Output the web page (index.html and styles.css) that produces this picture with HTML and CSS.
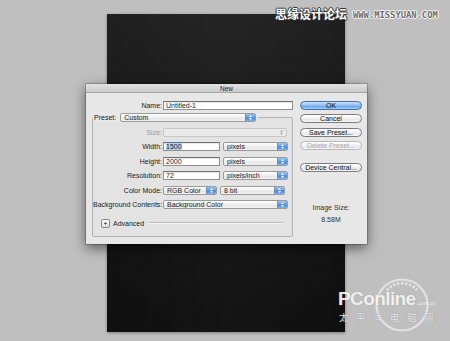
FILE: index.html
```html
<!DOCTYPE html>
<html>
<head>
<meta charset="utf-8">
<link rel="stylesheet" href="styles.css">
</head>
<body>
<div class="stage">
  <div class="doc"></div>

  <div class="dialog">
    <div class="titlebar">New</div>
    <div class="dbody">
      <div class="form">
        <div class="row name-row">
          <span class="label name-label">Name:</span>
          <span class="field name-field">Untitled-1</span>
        </div>
        <fieldset class="group">
          <legend class="legend">
            <span class="legend-in">
              <span class="plabel">Preset:</span>
              <span class="popup preset-pop"><span class="ptext">Custom</span><span class="cap"><svg width="9" height="9" viewBox="0 0 9 9"><path d="M3 4 L4.5 2 L6 4 Z M3 5 L6 5 L4.5 7 Z" fill="#fff"/></svg></span></span>
            </span>
          </legend>
          <div class="row first">
            <span class="label dim">Size:</span>
            <span class="popup disabled size-pop"><span class="ptext"></span><span class="cap"><svg width="9" height="9" viewBox="0 0 9 9"><path d="M3 4 L4.5 2 L6 4 Z M3 5 L6 5 L4.5 7 Z" fill="#a8a8a8"/></svg></span></span>
          </div>
          <div class="row">
            <span class="label">Width:</span>
            <span class="field num-field"><span class="sel">1500</span></span>
            <span class="popup unit-pop"><span class="ptext">pixels</span><span class="cap"><svg width="9" height="9" viewBox="0 0 9 9"><path d="M3 4 L4.5 2 L6 4 Z M3 5 L6 5 L4.5 7 Z" fill="#fff"/></svg></span></span>
          </div>
          <div class="row">
            <span class="label">Height:</span>
            <span class="field num-field">2000</span>
            <span class="popup unit-pop"><span class="ptext">pixels</span><span class="cap"><svg width="9" height="9" viewBox="0 0 9 9"><path d="M3 4 L4.5 2 L6 4 Z M3 5 L6 5 L4.5 7 Z" fill="#fff"/></svg></span></span>
          </div>
          <div class="row">
            <span class="label">Resolution:</span>
            <span class="field num-field">72</span>
            <span class="popup unit-pop"><span class="ptext">pixels/inch</span><span class="cap"><svg width="9" height="9" viewBox="0 0 9 9"><path d="M3 4 L4.5 2 L6 4 Z M3 5 L6 5 L4.5 7 Z" fill="#fff"/></svg></span></span>
          </div>
          <div class="row">
            <span class="label">Color Mode:</span>
            <span class="popup mode-pop"><span class="ptext">RGB Color</span><span class="cap"><svg width="9" height="9" viewBox="0 0 9 9"><path d="M3 4 L4.5 2 L6 4 Z M3 5 L6 5 L4.5 7 Z" fill="#fff"/></svg></span></span>
            <span class="popup unit-pop"><span class="ptext">8 bit</span><span class="cap"><svg width="9" height="9" viewBox="0 0 9 9"><path d="M3 4 L4.5 2 L6 4 Z M3 5 L6 5 L4.5 7 Z" fill="#fff"/></svg></span></span>
          </div>
          <div class="row">
            <span class="label">Background Contents:</span>
            <span class="popup bg-pop"><span class="ptext">Background Color</span><span class="cap"><svg width="9" height="9" viewBox="0 0 9 9"><path d="M3 4 L4.5 2 L6 4 Z M3 5 L6 5 L4.5 7 Z" fill="#fff"/></svg></span></span>
          </div>
          <div class="advanced">
            <span class="disc"><svg width="9" height="9" viewBox="0 0 9 9"><path d="M2.5 3.5 L6.5 3.5 L4.5 6 Z" fill="#222"/></svg></span>
            <span class="adv-text">Advanced</span>
            <span class="rule"></span>
          </div>
        </fieldset>
      </div>
      <div class="side">
        <span class="btn ok">OK</span>
        <span class="btn cancel">Cancel</span>
        <span class="btn save">Save Preset...</span>
        <span class="btn del">Delete Preset...</span>
        <span class="btn dev">Device Central...</span>
        <div class="info">
          <div class="info-line">Image Size:</div>
          <div class="info-line">8.58M</div>
        </div>
      </div>
    </div>
  </div>

  <div class="wm-top">
    <span class="wm-cn">思缘设计论坛</span>
    <span class="wm-url">WWW.MISSYUAN.COM</span>
  </div>

  <div class="wm-pc">
    <svg class="wm-ring" width="60" height="56" viewBox="0 0 60 56">
      <circle cx="30" cy="28" r="25.5" fill="none" stroke="rgba(255,255,255,0.55)" stroke-width="2.2"/>
      <path d="M15 13 A20 20 0 0 1 45 13" fill="none" stroke="rgba(255,255,255,0.6)" stroke-width="3" stroke-dasharray="2 2"/>
    </svg>
    <div class="wm-logo"><span class="wm-pcname">PConline</span><span class="wm-dom">.com.cn</span></div>
    <div class="wm-cn2">太平洋电脑网</div>
  </div>
</div>
</body>
</html>
```

FILE: styles.css
```css
html, body {
  margin: 0;
  padding: 0;
}

body {
  background: #bfbfbf;
  font-family: "Liberation Sans", Arial, sans-serif;
}

.stage {
  position: relative;
  width: 450px;
  height: 341px;
  padding-top: 14px;
  box-sizing: border-box;
  background: #bfbfbf;
  overflow: hidden;
}

.doc {
  margin-left: 107px;
  width: 238px;
  height: 318px;
  background: linear-gradient(90deg, rgba(255,255,255,0) 0%, rgba(255,255,255,0.02) 50%, rgba(255,255,255,0) 100%),
              linear-gradient(#202020, #1a1a1a 35%, #121212 80%, #0f0f0f);
  box-shadow: 0 1px 3px rgba(0,0,0,0.35);
}

/* dialog */
.dialog {
  position: absolute;
  left: 86px;
  top: 84px;
  width: 281px;
  height: 160px;
  background: #e7e7e7;
  box-shadow: 0 4px 12px rgba(0,0,0,0.55), 0 0 0 1px rgba(0,0,0,0.18);
  font-size: 7px;
  color: #1a1a1a;
}

.titlebar {
  height: 8px;
  line-height: 9px;
  text-align: center;
  font-size: 6.5px;
  color: #222;
  background: linear-gradient(#e2e2e2, #cacaca);
  border-bottom: 1px solid #a4a4a4;
}

.dbody {
  display: flex;
  padding-top: 8px;
}

.form {
  width: 207px;
}

.row {
  display: flex;
  align-items: center;
  height: 9px;
}

.label {
  width: 69px;
  margin-right: 1px;
  text-align: right;
  white-space: nowrap;
  flex: none;
}

.label.dim {
  color: #9a9a9a;
}

.name-label {
  width: 76px;
}

.field {
  box-sizing: border-box;
  height: 9px;
  line-height: 8px;
  padding-left: 2px;
  background: #fff;
  border: 1px solid #8e8e8e;
  border-top-color: #6e6e6e;
  box-shadow: inset 0 1px 0 rgba(0,0,0,0.08);
  white-space: nowrap;
  flex: none;
}

.name-field {
  width: 130px;
}

.num-field {
  width: 57px;
}

.sel {
  background: #b4d3fb;
}

.popup {
  box-sizing: border-box;
  height: 9px;
  display: flex;
  align-items: stretch;
  border: 1px solid #9a9a9a;
  border-radius: 2px;
  background: linear-gradient(#ffffff, #efefef 50%, #e2e2e2 51%, #f2f2f2);
  overflow: hidden;
  flex: none;
}

.ptext {
  flex: 1;
  padding-left: 3px;
  line-height: 7px;
  white-space: nowrap;
}

.cap {
  width: 9px;
  display: flex;
  align-items: center;
  justify-content: center;
  background: linear-gradient(#9ac3f3, #5c98e6 50%, #3b7ddb 51%, #7fb6f5);
  border-left: 1px solid #6a8fbf;
}

.cap svg {
  display: block;
}

.popup.disabled {
  border-color: #c6c6c6;
  background: #eaeaea;
}

.popup.disabled .cap {
  background: transparent;
  border-left: none;
}

.size-pop { width: 124px; }
.unit-pop { width: 65px; margin-left: 3px; }
.mode-pop { width: 54px; }
.bg-pop { width: 125px; }
.preset-pop { width: 136px; margin-left: 4px; }

.group {
  box-sizing: border-box;
  width: 201px;
  min-width: 0;
  margin: 3px 0 0 6px;
  padding: 0 4px 8px 0;
  border: 1px solid #b3b3b3;
  border-radius: 2px;
  background: #e3e3e3;
}

.legend {
  padding: 0 2px 0 0;
  margin: 0;
}

.legend-in {
  display: flex;
  align-items: center;
  height: 9px;
  background: #e7e7e7;
}

.plabel {
  padding-left: 1px;
}

.row.first {
  margin-top: 6px;
}

.group .row + .row {
  margin-top: 5.4px;
}

.advanced {
  display: flex;
  align-items: center;
  height: 9px;
  margin-top: 10px;
  padding-left: 8px;
}

.disc {
  box-sizing: border-box;
  width: 9px;
  height: 9px;
  border: 1px solid #8a8a8a;
  border-radius: 2px;
  background: linear-gradient(#fff, #dcdcdc);
  display: flex;
  align-items: center;
  justify-content: center;
}

.disc svg {
  display: block;
}

.adv-text {
  margin-left: 3px;
}

.rule {
  flex: 1;
  height: 0;
  margin: 0 5px 0 5px;
  border-top: 1px solid #b9b9b9;
  border-bottom: 1px solid #f6f6f6;
}

/* side buttons */
.side {
  width: 62px;
  margin-left: 7px;
  display: flex;
  flex-direction: column;
}

.btn {
  box-sizing: border-box;
  height: 9px;
  line-height: 7px;
  text-align: center;
  border: 1px solid #7c7c7c;
  border-radius: 5px;
  background: linear-gradient(#ffffff, #f1f1f1 50%, #e1e1e1 51%, #f7f7f7);
  white-space: nowrap;
  color: #111;
}

.btn.ok {
  border-color: #4c6f9f;
  background: linear-gradient(#c9e1fb, #8dbdf2 50%, #5c9ae8 51%, #9fd0fb);
}

.btn.cancel { margin-top: 4px; }
.btn.save { margin-top: 5px; }
.btn.del {
  margin-top: 4px;
  color: #a9a9a9;
  border-color: #b9b9b9;
}
.btn.dev { margin-top: 13px; }

.info {
  margin-top: 31px;
  text-align: center;
  color: #333;
}

.info-line {
  height: 9px;
  line-height: 9px;
}

.info-line + .info-line {
  margin-top: 3px;
}

/* watermarks */
.wm-top {
  position: absolute;
  left: 275px;
  top: 6px;
  display: flex;
  align-items: center;
  white-space: nowrap;
}

.wm-cn {
  font-family: "Noto Sans CJK SC", sans-serif;
  font-weight: bold;
  font-size: 12px;
  line-height: 16px;
  color: #fff;
  text-shadow: -1px 0 #333, 1px 0 #333, 0 -1px #333, 0 1px #333;
}

.wm-url {
  margin-left: 6px;
  margin-top: 2px;
  font-family: "DejaVu Sans Mono", monospace;
  font-weight: bold;
  font-size: 8.8px;
  color: #6e6e6e;
  text-shadow: -1px 0 #fafafa, 1px 0 #fafafa, 0 -1px #fafafa, 0 1px #fafafa;
}

.wm-pc {
  position: absolute;
  left: 338px;
  top: 277px;
  width: 110px;
  height: 56px;
}

.wm-ring {
  position: absolute;
  left: 34px;
  top: 0;
}

.wm-logo {
  position: absolute;
  left: 0;
  top: 13px;
  height: 17px;
  line-height: 17px;
  white-space: nowrap;
  display: flex;
  align-items: baseline;
}

.wm-pcname {
  font-family: "Liberation Sans", Arial, sans-serif;
  font-weight: bold;
  font-size: 19px;
  letter-spacing: -0.6px;
  color: rgba(250,250,250,0.92);
  text-shadow: 0 0 1px rgba(120,120,120,0.6);
}

.wm-dom {
  font-size: 5.5px;
  color: rgba(250,250,250,0.8);
  margin-left: 1px;
}

.wm-cn2 {
  position: absolute;
  left: 1px;
  top: 35px;
  font-family: "Noto Sans CJK SC", sans-serif;
  font-size: 9.5px;
  line-height: 10px;
  letter-spacing: 7.5px;
  color: rgba(245,245,245,0.85);
  text-shadow: 0 0 1px rgba(110,110,110,0.7);
  white-space: nowrap;
}
```
